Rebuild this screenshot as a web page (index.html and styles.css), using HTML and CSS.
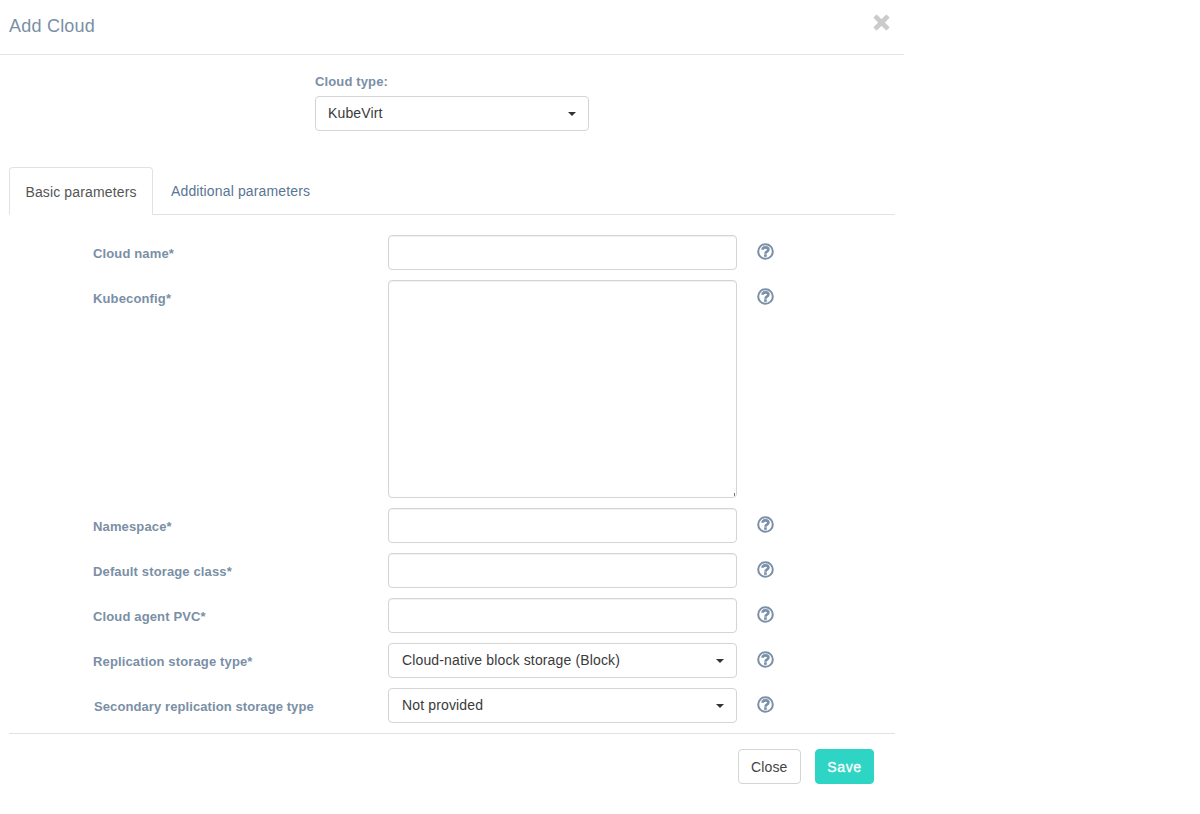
FILE: index.html
```html
<!DOCTYPE html>
<html lang="en">
<head>
<meta charset="utf-8">
<title>Add Cloud</title>
<link rel="stylesheet" href="styles.css">
</head>
<body>
<svg class="sprite" width="0" height="0" aria-hidden="true">
  <symbol id="help" viewBox="0 0 17 17">
    <circle cx="8.5" cy="8.5" r="7.3" fill="none" stroke="currentColor" stroke-width="2"/>
    <path d="M5.6 6.8c0-1.5 1.2-2.4 2.9-2.4 1.7 0 2.9.9 2.9 2.2 0 1.1-.7 1.6-1.5 2.1-.8.5-1.3.9-1.3 1.6v.4" fill="none" stroke="currentColor" stroke-width="2.7"/>
    <rect x="7.1" y="11.3" width="2.7" height="2.5" fill="currentColor"/>
  </symbol>
</svg>
<div class="modal">
  <header class="modal-header">
    <h4 class="modal-title">Add Cloud</h4>
    <button class="close" type="button" aria-label="Close">
      <svg width="16" height="16" viewBox="0 0 16 16"><path d="M3.4 1 8 5.6 12.6 1 15 3.4 10.4 8 15 12.6 12.6 15 8 10.4 3.4 15 1 12.6 5.6 8 1 3.4z" fill="currentColor" stroke="currentColor" stroke-width="1" stroke-linejoin="round"/></svg>
    </button>
  </header>
  <div class="modal-body">
    <div class="cloud-type">
      <label class="type-label">Cloud type:</label>
      <div class="select"><span>KubeVirt</span><i class="caret"></i></div>
    </div>
    <ul class="tabs">
      <li class="tab active">Basic parameters</li>
      <li class="tab">Additional parameters</li>
    </ul>
    <div class="form">
      <div class="row">
        <label class="field-label">Cloud name*</label>
        <input class="control" type="text">
        <svg class="help"><use href="#help"/></svg>
      </div>
      <div class="row">
        <label class="field-label">Kubeconfig*</label>
        <textarea class="control area"></textarea>
        <svg class="help"><use href="#help"/></svg>
      </div>
      <div class="row">
        <label class="field-label">Namespace*</label>
        <input class="control" type="text">
        <svg class="help"><use href="#help"/></svg>
      </div>
      <div class="row">
        <label class="field-label">Default storage class*</label>
        <input class="control" type="text">
        <svg class="help"><use href="#help"/></svg>
      </div>
      <div class="row">
        <label class="field-label">Cloud agent PVC*</label>
        <input class="control" type="text">
        <svg class="help"><use href="#help"/></svg>
      </div>
      <div class="row">
        <label class="field-label">Replication storage type*</label>
        <div class="select"><span>Cloud-native block storage (Block)</span><i class="caret"></i></div>
        <svg class="help"><use href="#help"/></svg>
      </div>
      <div class="row">
        <label class="field-label field-label-long">Secondary replication storage type</label>
        <div class="select"><span>Not provided</span><i class="caret"></i></div>
        <svg class="help"><use href="#help"/></svg>
      </div>
    </div>
    <footer class="modal-footer">
      <button class="btn" type="button">Close</button>
      <button class="btn btn-save" type="button">Save</button>
    </footer>
  </div>
</div>
</body>
</html>
```

FILE: styles.css
```css
* { box-sizing: border-box; }
html, body { margin: 0; padding: 0; background: #fff; }
body {
  font-family: "Liberation Sans", Arial, sans-serif;
  font-size: 14px;
  letter-spacing: 0.14px;
  color: #333;
  height: 814px;
  overflow: hidden;
}
.sprite { position: absolute; }
.modal { width: 904px; }
.modal-header {
  display: flex;
  justify-content: space-between;
  height: 55px;
  padding: 0 14px 0 9px;
  border-bottom: 1px solid #e5e5e5;
}
.modal-title {
  margin: 15px 0 0;
  font-size: 18px;
  line-height: 22px;
  font-weight: 400;
  letter-spacing: 0.22px;
  color: #7a8fa6;
}
.close {
  align-self: flex-start;
  display: block;
  margin-top: 14px;
  padding: 0;
  width: 17px;
  height: 17px;
  border: 0;
  background: none;
  color: #cbcbcb;
}
.close svg { display: block; width: 17px; height: 17px; }
.modal-body { padding: 0 9px; }
.cloud-type {
  width: 274px;
  margin: 0 auto;
  padding-top: 18px;
}
.type-label {
  display: block;
  height: 23px;
  font-size: 13px;
  line-height: 17px;
  font-weight: 700;
  color: #7a8fa6;
}
.select {
  display: flex;
  align-items: center;
  justify-content: space-between;
  height: 35px;
  padding: 0 12px;
  border: 1px solid #d4d4d4;
  border-radius: 4px;
  background: #fff;
  color: #3a3a3a;
  line-height: 20px;
}
.row .select { padding-left: 13px; }
.select span { margin-top: -2px; }
.caret {
  width: 0;
  height: 0;
  border-top: 4px solid #333;
  border-left: 4px solid transparent;
  border-right: 4px solid transparent;
}
.tabs {
  display: flex;
  list-style: none;
  margin: 36px 0 0;
  padding: 0;
  height: 48px;
  border-bottom: 1px solid #e2e2e2;
}
.tab {
  height: 48px;
  padding: 15px 18px 0;
  line-height: 18px;
  color: #5a7593;
}
.tab.active {
  width: 144px;
  padding: 15px 0 0;
  text-align: center;
  color: #555;
  background: #fff;
  border: 1px solid #e2e2e2;
  border-bottom-color: #fff;
  border-radius: 4px 4px 0 0;
}
.form {
  display: flex;
  flex-direction: column;
  gap: 10px;
  padding: 20px 0 10px 84px;
  border-bottom: 1px solid #e2e2e2;
}
.row {
  display: grid;
  grid-template-columns: 295px 349px 37px;
  align-items: start;
}
.field-label {
  font-size: 13px;
  font-weight: 700;
  line-height: 18px;
  padding-top: 10px;
  color: #7a8fa6;
}
.field-label-long {
  padding-left: 1px;
  letter-spacing: 0.09px;
}
.control {
  display: block;
  width: 349px;
  height: 35px;
  margin: 0;
  padding: 6px 12px;
  border: 1px solid #d4d4d4;
  border-radius: 4px;
  background: #fff;
  box-shadow: inset 0 1px 1px rgba(0, 0, 0, 0.06);
  font: inherit;
}
.area {
  height: 218px;
  resize: none;
  background: linear-gradient(#777, #777) no-repeat right 1px bottom 1px / 1px 3px #fff;
}
.help {
  width: 17px;
  height: 17px;
  margin: 8px 0 0 20px;
  color: #7a90a8;
  overflow: visible;
}
.modal-footer {
  display: flex;
  justify-content: flex-end;
  gap: 14px;
  padding: 15px 21px 0 0;
}
.btn {
  height: 35px;
  padding: 0 12.5px;
  border: 1px solid #d4d4d4;
  border-radius: 4px;
  background: #fff;
  font: inherit;
  letter-spacing: inherit;
  color: #444;
}
.btn-save {
  width: 59px;
  padding: 0;
  border-color: #2fd5c4;
  background: #2fd5c4;
  color: #fff;
  font-weight: 400;
  letter-spacing: 0.6px;
  -webkit-text-stroke: 0.3px #fff;
}
```
